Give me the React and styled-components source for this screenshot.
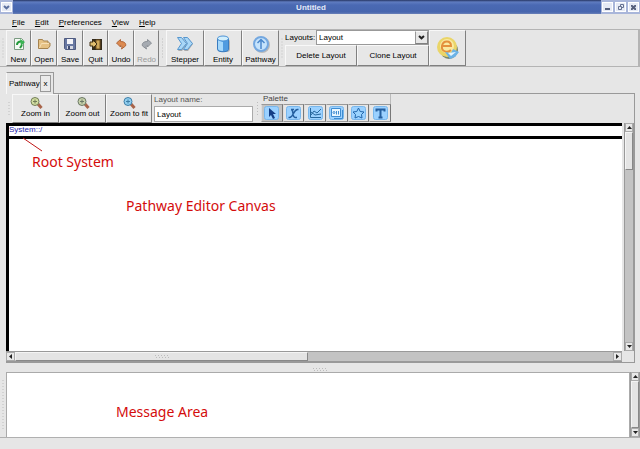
import React from "react";
import styled, { createGlobalStyle, css } from "styled-components";

const Global = createGlobalStyle`
  * { box-sizing: border-box; }
  body { margin: 0; background: #e6e6e6; }
  body, button, input, select {
    font-family: "Liberation Sans", Arial, sans-serif;
    font-size: 8px;
    line-height: 10px;
    color: #000;
  }
`;

const raised = css`
  background: #e7e7e7;
  border: 1px solid;
  border-color: #f8f8f8 #808080 #808080 #f8f8f8;
`;

const Window = styled.div`
  min-height: 100vh;
  display: flex;
  flex-direction: column;
`;

const TitleBar = styled.header`
  height: 14px;
  display: flex;
  align-items: stretch;
  color: #fff;
  background: linear-gradient(#263663 0, #5f7cc0 2px, #4a69b3 5px, #4766ae 12px, #6a80b8 14px);
`;
const Title = styled.h1`
  flex: 1;
  margin: 0;
  padding: 3px 0 0 8px;
  text-align: center;
  font-size: 8px;
  line-height: 10px;
  color: #e4eaf8;
`;
const WindowButtons = styled.div`
  display: flex;
  gap: 2px;
  padding: 2px 1px;
  background: #a9b6da;
`;
const WindowButton = styled.button`
  width: 11px;
  height: 10px;
  padding: 0;
  border: 1px solid #fff;
  background: #e6eaf5;
  display: grid;
  place-items: center;
`;

const MenuBar = styled.nav`
  display: flex;
  height: 15px;
  padding: 3px 7px 0;
`;
const MenuItem = styled.button`
  border: 0;
  padding: 0 5px;
  background: none;
`;

const ToolBar = styled.div`
  display: flex;
  height: 38px;
  border-top: 1px solid #b4b4b4;
  border-bottom: 1px solid #b4b4b4;
  border-right: 2px solid #b4b4b4;
`;
const Grip = styled.div`
  flex: none;
  width: ${(p) => p.$width || 6}px;
  background: radial-gradient(circle, #bdbdbd 1px, transparent 1px) center / 3px 3px content-box;
  padding: 8px 1px;
`;
const ToolButton = styled.button`
  ${raised}
  flex: none;
  width: ${(p) => p.$width}px;
  padding: 0 0 ${(p) => (p.$compact ? 4 : 1)}px;
  display: grid;
  grid-template-rows: 1fr auto;
  place-items: center;
  line-height: 8px;
  white-space: nowrap;
  &:disabled { color: #999; }
`;
const LayoutPanel = styled.div`
  width: 144px;
  display: flex;
  flex-direction: column;
`;
const LayoutField = styled.div`
  display: flex;
  height: 15px;
  align-items: center;
  & > label { width: 31px; }
`;
const SelectBox = styled.div`
  flex: 1;
  height: 15px;
  display: grid;
  grid-template-columns: 1fr 13px;
  border: 1px solid #999;
`;
const LayoutSelect = styled.select`
  grid-area: 1 / 1 / 2 / 3;
  min-width: 0;
  appearance: none;
  border: 0;
  border-radius: 0;
  padding: 0 2px;
  background: #fff;
`;
const SelectArrow = styled.span`
  ${raised}
  grid-area: 1 / 2;
  z-index: 1;
  pointer-events: none;
  display: grid;
  place-items: center;
  border-left-color: #999;
`;
const LayoutActions = styled.div`
  flex: 1;
  display: grid;
  grid-template-columns: 1fr 1fr;
`;
const ActionButton = styled.button`
  ${raised}
  padding: 0;
`;

const TabBar = styled.div`
  display: flex;
  padding: 5px 6px 0;
`;
const Tab = styled.div`
  display: flex;
  align-items: center;
  height: 22px;
  margin-bottom: -1px;
  padding: 0 2px;
  border: 1px solid #999;
  border-left-color: #f8f8f8;
  border-bottom: 0;
  background: #e6e6e6;
  z-index: 1;
`;
const TabLabel = styled.button`
  width: 31px;
  border: 0;
  padding: 0;
  background: none;
  text-align: left;
`;
const TabClose = styled.button`
  width: 11px;
  height: 17px;
  padding: 0;
  border: 1px solid #999;
  background: #eaeaea;
`;

const EditorFrame = styled.main`
  flex: 1;
  display: flex;
  flex-direction: column;
  margin: 0 5px 0 6px;
  border: solid #999;
  border-width: 1px 1px 1px 0;
`;
const EditorTools = styled.div`
  display: flex;
  height: 29px;
`;
const NameGroup = styled.div`
  width: 102px;
  display: flex;
  flex-direction: column;
  justify-content: space-between;
  padding: 1px 1px 1px 2px;
  color: #555;
`;
const NameInput = styled.input`
  width: 100%;
  height: 16px;
  padding: 0 2px;
  border: 1px solid #aaa;
  border-radius: 0;
  background: #fff;
`;
const PaletteGroup = styled.div`
  width: 130px;
  display: flex;
  flex-direction: column;
  justify-content: space-between;
  padding-bottom: 1px;
  color: #444;
`;
const GroupTitle = styled.span`
  padding-left: 2px;
  border-right: 1px solid #bbb;
`;
const PaletteButtons = styled.div`
  display: grid;
  grid-template-columns: repeat(6, 1fr);
`;
const PaletteButton = styled.button`
  height: 18px;
  padding: 0;
  border: 1px solid;
  border-color: #999 #777 #999 #ddd;
  background: ${(p) => (p.$active ? "#c4c4c4" : "#e6e6e6")};
  display: grid;
  place-items: center;
`;

const Workspace = styled.div`
  flex: 1;
  display: grid;
  grid-template-columns: 1fr 10px;
  grid-template-rows: 1fr 11px;
  column-gap: 2px;
`;
const Canvas = styled.section`
  position: relative;
  min-height: 226px;
  background: #fff;
  border-left: 3px solid #000;
`;
const RootSystem = styled.div`
  height: 16px;
  border-top: 3px solid #000;
  border-bottom: 3px solid #000;
  color: #2222aa;
  line-height: 8px;
  font-size: 8px;
`;
const Note = styled.span`
  position: absolute;
  left: ${(p) => p.$left}px;
  top: ${(p) => p.$top}px;
  color: #d40c0c;
  font-family: "Noto Sans", sans-serif;
  font-size: 14px;
  line-height: 18px;
  white-space: nowrap;
`;
const Pointer = styled.svg`
  position: absolute;
  left: 13px;
  top: 14px;
`;

const ScrollBar = styled.div`
  display: flex;
  flex-direction: ${(p) => (p.$horizontal ? "row" : "column")};
  background: #c3c3c3;
  border: solid #999;
  border-width: ${(p) => (p.$horizontal ? "1px 0" : "0 1px")};
`;
const ScrollButton = styled.button`
  flex: none;
  width: ${(p) => (p.$horizontal ? "9px" : "auto")};
  height: ${(p) => (p.$horizontal ? "auto" : "9px")};
  padding: 0;
  border: 1px solid #aaa;
  background: #e8e8e8;
  display: grid;
  place-items: center;
`;
const Track = styled.div`
  flex: 1;
  display: flex;
  flex-direction: ${(p) => (p.$horizontal ? "row" : "column")};
`;
const Thumb = styled.div`
  flex: 0 0 ${(p) => p.$size}%;
  display: grid;
  place-items: center;
  background: #e4e4e4;
  border: 1px solid;
  border-color: #f4f4f4 #888 #888 #f4f4f4;
`;

const Splitter = styled.div`
  height: 9px;
  display: grid;
  justify-items: center;
  align-items: end;
`;
const MessageRow = styled.section`
  display: grid;
  grid-template-columns: 6px 1fr 10px;
  height: 66px;
  border-bottom: 1px solid #b0b0b0;
`;
const MessageArea = styled.div`
  background: #fff;
  border: 1px solid #aaa;
  border-bottom: 0;
  position: relative;
`;
const StatusBar = styled.footer`
  height: 11px;
`;

const Dots = () => (
  <svg width="14" height="5" viewBox="0 0 14 5" stroke="#bcbcbc" strokeDasharray="1 2">
    <path d="M0 1.5H14M1 3.5H14" />
  </svg>
);

const ARROWS = {
  up: "M0 4L2.5 1L5 4Z",
  down: "M0 1L2.5 4L5 1Z",
  left: "M4 0L1 2.5L4 5Z",
  right: "M1 0L4 2.5L1 5Z",
};
const Arrow = ({ dir }) => (
  <svg width="5" height="5" viewBox="0 0 5 5"><path d={ARROWS[dir]} fill="#222" /></svg>
);

const Chevron = ({ color = "#222" }) => (
  <svg width="7" height="5" viewBox="0 0 7 5" fill="none" stroke={color} strokeWidth="2">
    <path d="M1 1l2.5 2.3L6 1" />
  </svg>
);

function Scroller({ horizontal, size, dotted }) {
  const [start, end] = horizontal ? ["left", "right"] : ["up", "down"];
  return (
    <ScrollBar $horizontal={horizontal}>
      <ScrollButton $horizontal={horizontal} aria-label={`Scroll ${start}`}><Arrow dir={start} /></ScrollButton>
      <Track $horizontal={horizontal}>
        <Thumb $size={size}>{dotted && <Dots />}</Thumb>
      </Track>
      <ScrollButton $horizontal={horizontal} aria-label={`Scroll ${end}`}><Arrow dir={end} /></ScrollButton>
    </ScrollBar>
  );
}

const SmallIcon = ({ children }) => (
  <svg width="14" height="14" viewBox="0 0 14 14">{children}</svg>
);

const NewIcon = () => (
  <SmallIcon>
    <path d="M2.500 1.500h7l2 2v9h-9z" fill="#f5faf5" stroke="#7a9a80" />
    <path d="M5 8c0-3 2-3.500 4-3.500" fill="none" stroke="#249a3c" strokeWidth="2" />
    <path d="M8 2l5 3-4 4z" fill="#3bb454" />
    <path d="M10 8l-2 3" stroke="#249a3c" strokeWidth="2" />
  </SmallIcon>
);
const OpenIcon = () => (
  <SmallIcon>
    <path d="M1.500 11.500v-9h4l1 1.500H11v2h2v3l-2 2.500z" fill="#e5c184" stroke="#a5834f" />
    <path d="M2.500 11l2-4.500H12" fill="none" stroke="#f6dfb5" />
  </SmallIcon>
);
const SaveIcon = () => (
  <SmallIcon>
    <path d="M1.500 1.500h11v11h-10l-1-1z" fill="#6878a2" stroke="#4f5b80" />
    <path d="M4 2h6v5H4z" fill="#f4f4f8" />
    <path d="M4 9h6v3H4z" fill="#d5d8e2" /><path d="M5 9h2v3H5z" fill="#414d70" />
  </SmallIcon>
);
const QuitIcon = () => (
  <SmallIcon>
    <path d="M3 2h10v11H3z" fill="#332b1c" />
    <path d="M7 3h4v9H7z" fill="#cfa95d" stroke="#745321" />
    <path d="M1 5h3V3l4 4-4 4V9H1z" fill="#e0bd6f" stroke="#433014" />
  </SmallIcon>
);
const TurnIcon = ({ flip, fill, stroke }) => (
  <SmallIcon>
    <g transform={flip ? "translate(14 0) scale(-1 1)" : undefined}>
      <path d="M2.500 6l4-3.500v2c4 0 6 2 5 4.500l-4 3c1-3 0-3.500-1-3.500v1.500z" fill={fill} stroke={stroke} />
    </g>
  </SmallIcon>
);

const StepperIcon = () => (
  <svg width="20" height="20" viewBox="0 0 20 20">
    <path d="M4 4h3l5 6-5 7H3l4-7zM10 4h3l5 6-5 7H9l4-7z" fill="#aaa" />
    <path d="M2.500 3.500h4l5 6-5 6h-4l4-6zM8.500 3.500h4l5 6-5 6h-4l4-6z" fill="#a9d7f7" stroke="#5797cf" />
  </svg>
);
const EntityIcon = () => (
  <svg width="20" height="20" viewBox="0 0 20 20">
    <rect x="5" y="5" width="12" height="13" rx="3" fill="#b5b5b5" />
    <path d="M4.500 4.500v11c0 3 11 3 11 0v-11z" fill="#4f9be0" stroke="#397cc0" />
    <path d="M5 6v9c1 2 4 2 5 2V8z" fill="#a5d8fb" />
    <ellipse cx="10" cy="4.500" rx="5.500" ry="2.500" fill="#d2effd" stroke="#4c93d6" />
  </svg>
);
const PathwayIcon = () => (
  <svg width="20" height="20" viewBox="0 0 20 20">
    <circle cx="11" cy="11" r="8" fill="#b9b9b9" />
    <circle cx="10" cy="10" r="7" fill="#c5e3fc" stroke="#74a8e0" strokeWidth="2" />
    <path d="M10 15V6M6.500 9L10 5.500 13.500 9" fill="none" stroke="#4b88cc" strokeWidth="1.500" />
  </svg>
);
const ECellIcon = () => (
  <svg width="26" height="26" viewBox="0 0 26 26">
    <ellipse cx="14" cy="15" rx="9" ry="9" fill="#78876d" />
    <circle cx="12" cy="12" r="10" fill="#ead568" />
    <circle cx="12" cy="11" r="7" fill="#fae9a0" />
    <path d="M8 11h8c0-6-8-6-9 0-1 6 6 7 9 4" fill="none" stroke="#e4913c" strokeWidth="2" />
    <path d="M10 17l6 1 2-4 6 3-4 5-5 2z" fill="#6bb2e6" />
    <path d="M13 18l8-1-5 4z" fill="#e4f6ff" />
  </svg>
);

const ZoomIcon = ({ fill, stroke }) => (
  <SmallIcon>
    <path d="M9 8l3.500 4" stroke="#a8644a" strokeWidth="3" />
    <circle cx="6" cy="5.500" r="4" fill={fill} stroke={stroke} />
    <path d="M4 5.500h4M6 3.500v4" stroke={stroke} />
  </SmallIcon>
);

const PALETTE = [
  ["Select", <path d="M6 3v9l2-2 2 4 2-1-2-4h3z" fill="#153f86" />],
  ["Variable", <path d="M6 4.500c3 0 1 8 4 8h2M13.500 4.500h-1c-4 0-4 8-8 8h-1M6 4.500h3" fill="none" stroke="#245f9f" strokeWidth="1.500" />],
  ["Process", <path d="M3.500 3v9.500H14M4 10l3-4 3 2 4-4M4 7l4 3 6-1" fill="none" stroke="#28689e" />],
  ["System", <><path d="M3.500 3.500h9v8h-9z" fill="#e8f6ff" stroke="#3f8cd1" /><circle cx="6" cy="7.500" r="1" fill="none" stroke="#3f8cd1" /><path d="M8.500 6v3.500M10.500 6v3.500M14.500 5v8.500H6" fill="none" stroke="#3f8cd1" /></>],
  ["Custom shape", <path d="M8.500 3l1.700 3.500L14 7l-2.500 2.500.5 3.500-3.500-1.500L5 13l.500-3.500L3 7l3.800-.500z" fill="#9bd4ff" stroke="#2166ab" />],
  ["Text", <path d="M4.500 6.500v-2h8v2M8.500 4v9M6.500 12.500h4" fill="none" stroke="#245f9f" strokeWidth="2" />],
];
const PaletteIcon = ({ children }) => (
  <svg width="17" height="16" viewBox="0 0 17 16">
    <rect x="1.500" y="1.500" width="14" height="13" rx="2" fill="#9bd1ff" stroke="#78b7ec" />
    {children}
  </svg>
);

const FILE_TOOLS = [
  ["New", 25, <NewIcon />],
  ["Open", 26, <OpenIcon />],
  ["Save", 26, <SaveIcon />],
  ["Quit", 25, <QuitIcon />],
  ["Undo", 26, <TurnIcon fill="#dd8a50" stroke="#b0683d" />],
  ["Redo", 25, <TurnIcon flip fill="#a6abb2" stroke="#8b9097" />],
];
const VIEW_TOOLS = [
  ["Stepper", 38, <StepperIcon />],
  ["Entity", 38, <EntityIcon />],
  ["Pathway", 37, <PathwayIcon />],
];
const ZOOM_TOOLS = [
  ["Zoom in", 47, <ZoomIcon fill="#d1dda0" stroke="#737e59" />],
  ["Zoom out", 47, <ZoomIcon fill="#c6d1aa" stroke="#6b7866" />],
  ["Zoom to fit", 46, <ZoomIcon fill="#91cfef" stroke="#3e7ea7" />],
];

const Tools = ({ items, compact }) =>
  items.map(([label, width, icon]) => (
    <ToolButton key={label} $width={width} $compact={compact} disabled={label === "Redo"}>
      {icon}
      <span>{label}</span>
    </ToolButton>
  ));

export default function App() {
  return (
    <Window>
      <Global />
      <TitleBar>
        <WindowButtons>
          <WindowButton aria-label="Window menu"><Chevron color="#5b6f9f" /></WindowButton>
        </WindowButtons>
        <Title>Untitled</Title>
        <WindowButtons>
          <WindowButton aria-label="Minimize">
            <svg width="5" height="5"><path d="M0 4h5" stroke="#555f7c" strokeWidth="2" /></svg>
          </WindowButton>
          <WindowButton aria-label="Restore">
            <svg width="6" height="6" fill="none" stroke="#667291"><path d="M2.500 2V.5h3v3H4M.5 2.500h3v3h-3z" /></svg>
          </WindowButton>
          <WindowButton aria-label="Close">
            <svg width="5" height="5"><path d="M0 0l5 5M5 0L0 5" stroke="#555f7c" strokeWidth="2" /></svg>
          </WindowButton>
        </WindowButtons>
      </TitleBar>
      <MenuBar>
        {["File", "Edit", "Preferences", "View", "Help"].map((name) => (
          <MenuItem key={name}><u>{name[0]}</u>{name.slice(1)}</MenuItem>
        ))}
      </MenuBar>
      <ToolBar>
        <Grip />
        <Tools items={FILE_TOOLS} />
        <Grip $width={7} />
        <Tools items={VIEW_TOOLS} />
        <Grip />
        <LayoutPanel>
          <LayoutField>
            <label htmlFor="layouts">Layouts:</label>
            <SelectBox>
              <LayoutSelect id="layouts"><option>Layout</option></LayoutSelect>
              <SelectArrow><Chevron /></SelectArrow>
            </SelectBox>
          </LayoutField>
          <LayoutActions>
            <ActionButton>Delete Layout</ActionButton>
            <ActionButton>Clone Layout</ActionButton>
          </LayoutActions>
        </LayoutPanel>
        <ToolButton $width={37} aria-label="E-Cell"><ECellIcon /></ToolButton>
      </ToolBar>
      <TabBar>
        <Tab>
          <TabLabel>Pathway</TabLabel>
          <TabClose aria-label="Close tab">x</TabClose>
        </Tab>
      </TabBar>
      <EditorFrame>
        <EditorTools>
          <Grip />
          <Tools items={ZOOM_TOOLS} compact />
          <NameGroup>
            <label htmlFor="layout-name">Layout name:</label>
            <NameInput id="layout-name" defaultValue="Layout" />
          </NameGroup>
          <Grip $width={7} />
          <PaletteGroup>
            <GroupTitle>Palette</GroupTitle>
            <PaletteButtons>
              {PALETTE.map(([name, shape], i) => (
                <PaletteButton key={name} aria-label={name} $active={i === 0}>
                  <PaletteIcon>{shape}</PaletteIcon>
                </PaletteButton>
              ))}
            </PaletteButtons>
          </PaletteGroup>
        </EditorTools>
        <Workspace>
          <Canvas>
            <RootSystem>System::/</RootSystem>
            <Pointer width="22" height="15"><path d="M1 1L20 14" stroke="#c01818" /></Pointer>
            <Note $left={23} $top={30}>Root System</Note>
            <Note $left={117} $top={74}>Pathway Editor Canvas</Note>
          </Canvas>
          <Scroller size={18} />
          <Scroller horizontal size={49} dotted />
        </Workspace>
      </EditorFrame>
      <Splitter><Dots /></Splitter>
      <MessageRow>
        <Grip />
        <MessageArea><Note $left={109} $top={30}>Message Area</Note></MessageArea>
        <Scroller size={100} />
      </MessageRow>
      <StatusBar />
    </Window>
  );
}
